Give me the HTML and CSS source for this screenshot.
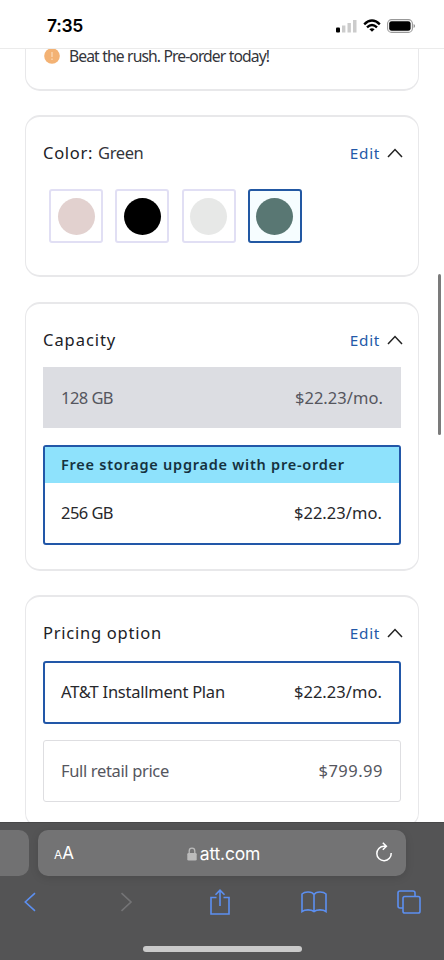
FILE: index.html
```
<!DOCTYPE html>
<html lang="en">
<head>
<meta charset="utf-8">
<meta name="viewport" content="width=device-width, initial-scale=1">
<title>att.com</title>
<link rel="stylesheet" href="styles.css">
</head>
<body>
<header class="status">
  <span class="time">7:35</span>
  <div class="indicators">
    <svg width="21" height="14" viewBox="0 0 21 14"><rect x="0" y="8.5" width="4" height="5" rx="1" fill="#000"/><path d="M6 6.5h3.4v7H6zM11.5 4h3.4v9.500h-3.400zM17 1h3.500v12.500H17z" fill="#ccc"/></svg>
    <svg width="18" height="14" viewBox="0 0 18 14" fill="none" stroke="#000" stroke-width="2.400"><path d="M1.200 5.300Q9-2.100 16.800 5.300M4 8.300Q9 3.700 14 8.300"/><path d="M9 12.700L6.400 10.200Q9 8.200 11.600 10.200Z" fill="#000" stroke="none"/></svg>
    <svg width="28" height="14" viewBox="0 0 28 14"><rect x=".6" y=".6" width="24.800" height="12.800" rx="4" fill="none" stroke="#999" stroke-width="1.100"/><rect x="2.200" y="2.200" width="21.400" height="9.600" rx="2.400"/><path d="M26.600 5q1.400.5 1.400 2t-1.400 2z" fill="#888"/></svg>
  </div>
</header>
<main class="page">
  <section class="card notice">
    <svg width="16" height="16" viewBox="0 0 16 16"><circle cx="8" cy="8" r="7.800" fill="#f3b274"/><path d="M8 4v5M8 10.500v1.500" stroke="#fbd9b6" stroke-width="1.300"/></svg>
    <span class="notice-text">Beat the rush. Pre-order today!</span>
  </section>

  <section class="card color">
    <div class="head"><h2 class="color-title">Color: <span>Green</span></h2><a class="edit">Edit<svg width="16" height="10" viewBox="0 0 16 10"><path d="M1 9L8 1.500L15 9"/></svg></a></div>
    <div class="swatches">
      <div class="swatch"><i class="dot pink"></i></div>
      <div class="swatch"><i class="dot black"></i></div>
      <div class="swatch"><i class="dot white"></i></div>
      <div class="swatch selected"><i class="dot green"></i></div>
    </div>
  </section>

  <section class="card capacity">
    <div class="head"><h2>Capacity</h2><a class="edit">Edit<svg width="16" height="10" viewBox="0 0 16 10"><path d="M1 9L8 1.500L15 9"/></svg></a></div>
    <div class="option disabled"><span class="label gb">128 GB</span><span class="price">$22.23/mo.</span></div>
    <div class="option active promo">
      <div class="banner">Free storage upgrade with pre-order</div>
      <div class="row"><span class="label gb">256 GB</span><span class="price">$22.23/mo.</span></div>
    </div>
  </section>

  <section class="card pricing">
    <div class="head"><h2>Pricing option</h2><a class="edit">Edit<svg width="16" height="10" viewBox="0 0 16 10"><path d="M1 9L8 1.500L15 9"/></svg></a></div>
    <div class="option active plan"><span class="label plan-name">AT&amp;T Installment Plan</span><span class="price">$22.23/mo.</span></div>
    <div class="option plain"><span class="label retail">Full retail price</span><span class="price full">$799.99</span></div>
  </section>
  <div class="scrollbar"></div>
</main>
<footer class="browser">
  <div class="tabs">
    <div class="prev-tab"></div>
    <div class="address">
      <span class="aa"><small>A</small>A</span>
      <span class="domain"><svg width="10" height="14" viewBox="0 0 10 14"><path d="M2.200 7V4a2.800 2.800 0 0 1 5.600 0v3" fill="none" stroke="#bbb" stroke-width="1.300"/><rect x=".3" y="6" width="9.400" height="7.500" rx="1.300" fill="#bbb"/></svg>att.com</span>
      <svg class="reload" width="18" height="20" viewBox="0 0 18 20"><path d="M11 4.300H9A7.200 7.200 0 1 0 16.200 11M7.800.8L11.400 4.300L7.800 7.800"/></svg>
    </div>
  </div>
  <nav class="tools">
    <svg height="20" viewBox="0 0 12 20"><path d="M11 1.200L1.300 10L11 18.800"/></svg>
    <svg class="dim" height="20" viewBox="0 0 12 20"><path d="M2.500 1.200L12 10L2.500 18.800"/></svg>
    <svg height="26" viewBox="0 0 20 26"><path d="M6.500 8.500H1V25H19V8.500H13.500M10 17V1.200M5.500 5.700L10 1.200L14.500 5.700"/></svg>
    <svg height="22" viewBox="0 0 26 22"><path d="M13 3.500C11 .5 4 .2 1 3V20.500C4 18.300 10 18.300 13 20.500C16 18.300 22 18.300 25 20.500V3C22 .2 15 .5 13 3.500ZM13 3.500V20.500"/></svg>
    <svg height="24" viewBox="0 0 24 24"><path d="M18 6V3Q18 1 16 1H3Q1 1 1 3V16Q1 18 3 18H6"/><rect x="6" y="6.500" width="17" height="16.500" rx="1.800"/></svg>
  </nav>
  <div class="home"></div>
</footer>
</body>
</html>
```
FILE: styles.css
```
* { box-sizing: border-box; }
body {
  margin: 0;
  height: 960px;
  display: flex;
  flex-direction: column;
  overflow: hidden;
  background: #fff;
  color: #27282c;
  font: 400 16.5px/24px "Noto Sans", sans-serif;
}
svg { display: block; flex: none; }

.status {
  position: relative;
  z-index: 1;
  background: #fff;
  height: 49px;
  flex: none;
  padding: 3px 29px 0 47px;
  display: flex;
  align-items: center;
  justify-content: space-between;
  border-bottom: 1px solid #ebebeb;
}
.time { font: 600 17.5px/22px Inter, sans-serif; color: #000; letter-spacing: -.3px; }
.indicators { display: flex; gap: 6px; }

/* Content scrolls slightly beneath the status bar. */
.page {
  position: relative;
  height: 783px;
  margin-top: -10px;
  flex: none;
  overflow: hidden;
  padding: 10px 25px 0;
  display: flex;
  flex-direction: column;
  gap: 25px;
}
.card {
  flex: none;
  border: solid #e8e8ea;
  border-width: 2px 1px;
  border-radius: 15px;
  padding: 0 17px;
}
.notice {
  height: 42px;
  border-top: 0;
  border-radius: 0 0 15px 15px;
  padding: 0 18px;
  display: flex;
  align-items: flex-start;
  gap: 8px;
}
.notice svg { margin-top: -1px; }
.notice-text { font-size: 15.7px; line-height: 14px; letter-spacing: -.93px; word-spacing: .3px; color: #34353b; padding-left: 1px; }
.color { height: 162px; margin-top: -1px; }
.capacity { height: 269px; }
.pricing { height: 233px; margin-top: -1px; }

.head { height: 24px; margin-top: 24px; display: flex; align-items: center; justify-content: space-between; }
h2 { margin: 0; font-size: 16.500px; font-weight: 400; letter-spacing: .75px; color: #202126; }
.capacity h2 { letter-spacing: .95px; }
.color h2 { letter-spacing: .7px; }
h2 span { letter-spacing: -.4px; color: #34353b; }
.edit { display: flex; align-items: center; gap: 7px; color: #2359a8; font-size: 15.300px; letter-spacing: .7px; margin-right: -2px; }
.edit path { fill: none; stroke: #222; stroke-width: 1.500; }

.swatches { display: flex; gap: 12.300px; padding: 24px 6px 0; }
.swatch { width: 54px; height: 54px; border: 2px solid #e1dff4; border-radius: 3px; display: grid; place-items: center; }
.selected { border-color: #2258a3; background: #f6fdff; }
.dot { width: 37px; height: 37px; border-radius: 50%; }
.pink { background: #e2d1cf; }
.black { background: #000; }
.white { background: #e7e8e7; }
.green { background: #597773; }

.option { display: flex; align-items: center; justify-content: space-between; width: 358px; padding: 0 18px; }
.option .price { letter-spacing: .05px; }
.option .full { letter-spacing: .5px; }
.disabled { height: 61px; margin-top: 15px; background: #dcdde2; color: #55565e; }
.active { border: 2px solid #2257a8; border-radius: 3px; padding: 0 17px 1px 16px; }
.promo { display: block; height: 100px; margin-top: 17px; padding: 0; }
.banner { height: 36px; padding-left: 16px; background: #8ee2fc; color: #15323f; font-size: 14.500px; font-weight: 600; line-height: 35px; letter-spacing: .75px; white-space: nowrap; }
.row { height: 59px; padding: 0 17px 0 16px; display: flex; align-items: center; justify-content: space-between; }
.plan { height: 63px; margin-top: 16px; }
.plain { height: 62px; margin-top: 16px; border: 1px solid #dedee1; border-radius: 3px; padding: 0 17px; color: #55565e; }
.gb { letter-spacing: -.55px; }
.plan-name { letter-spacing: -.25px; }
.retail { letter-spacing: -.35px; }

.scrollbar { position: absolute; right: 3px; top: 235px; width: 3px; height: 161px; border-radius: 2px; background: #7b7b7b; }

.browser { height: 138px; flex: none; background: #545455; padding-top: 7px; border-top: 1px solid #484849; }
.tabs { display: flex; gap: 9px; height: 46px; }
.prev-tab { width: 29px; border-radius: 0 10px 10px 0; background: #717172; }
.address {
  width: 368px;
  padding: 0 13px 0 16px;
  display: grid;
  grid-template-columns: 1fr auto 1fr;
  align-items: center;
  border-radius: 10px;
  background: #737374;
  box-shadow: 0 2px 8px rgba(0, 0, 0, .12);
  color: #fff;
  font: 400 17px/22px Inter, sans-serif;
}
.aa { margin-top: 2px; }
.aa small { font-size: 12px; }
.domain { display: flex; align-items: center; gap: 3px; margin-top: 1px; font-size: 17.500px; letter-spacing: -.2px; }
.reload { justify-self: end; margin-bottom: 3px; fill: none; stroke: #fff; stroke-width: 1.500; }
.tools { height: 52px; padding: 0 22px 0 17px; display: flex; align-items: center; justify-content: space-between; }
.tools svg { width: 26px; fill: none; stroke: #5c8ff0; stroke-width: 1.600; }
.tools .dim { stroke: #747476; }
.home { width: 159px; height: 6px; margin: 18px auto 0; border-radius: 3px; background: #cacaca; }
```
